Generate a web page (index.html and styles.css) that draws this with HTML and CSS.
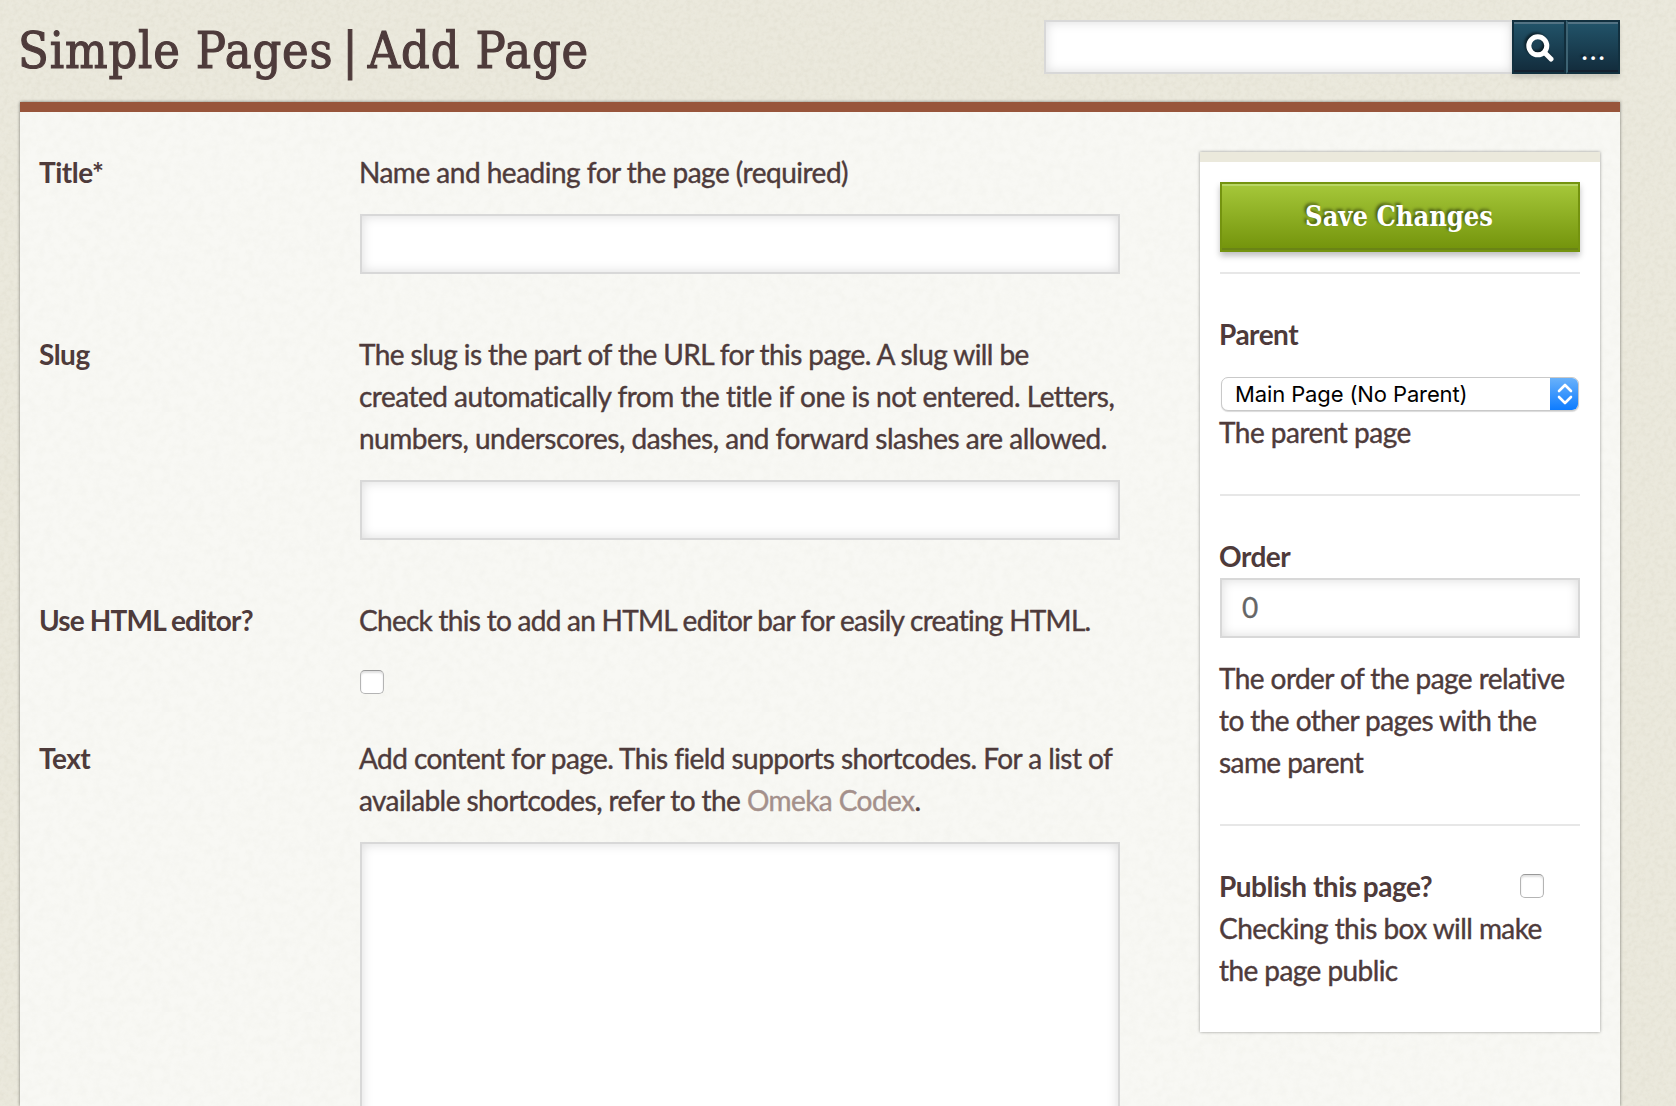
FILE: index.html
```html
<!DOCTYPE html>
<html lang="en">
<head>
<meta charset="utf-8">
<title>Simple Pages | Add Page</title>
<link rel="stylesheet" href="styles.css">
</head>
<body>
<header class="top">
  <h1 class="page-title">Simple Pages<span class="divider"> | </span>Add Page</h1>
  <form class="search">
    <input class="field search-field" type="text" aria-label="Search">
    <button class="search-btn" type="button" aria-label="Search">
      <svg class="search-icon" viewBox="0 0 28 28"><circle cx="11.8" cy="11.8" r="9" /><path d="M18.5 18.5L25 25" /></svg>
    </button>
    <button class="search-btn more-btn" type="button">...</button>
  </form>
</header>
<main class="panel">
  <section class="fields">
    <div class="row row-title">
      <label class="name">Title*</label>
      <div class="inputs">
        <p class="hint">Name and heading for the page (required)</p>
        <input class="field" type="text">
      </div>
    </div>
    <div class="row row-slug">
      <label class="name">Slug</label>
      <div class="inputs">
        <p class="hint"><span class="tight">The slug is the part of the URL for this page. A slug will be</span><br>created automatically from the title if one is not entered. Letters,<br>numbers, underscores, dashes, and forward slashes are allowed.</p>
        <input class="field" type="text">
      </div>
    </div>
    <div class="row row-editor">
      <label class="name">Use HTML editor?</label>
      <div class="inputs">
        <p class="hint">Check this to add an HTML editor bar for easily creating HTML.</p>
        <input class="check" type="checkbox">
      </div>
    </div>
    <div class="row row-text">
      <label class="name">Text</label>
      <div class="inputs">
        <p class="hint tight">Add content for page. This field supports shortcodes. For a list of<br>available shortcodes, refer to the <a class="link" href="#">Omeka Codex</a>.</p>
        <textarea class="field text-area"></textarea>
      </div>
    </div>
  </section>
  <aside class="save-panel">
    <button class="save-btn" type="button">Save Changes</button>
    <div class="block block-parent">
      <label class="name">Parent</label>
      <div class="select" role="combobox"><span class="select-value">Main Page (No Parent)</span><span class="select-cap"><svg class="select-arrows" viewBox="0 0 16 22"><path d="M2 8l6-6 6 6M2 14l6 6 6-6" /></svg></span></div>
      <p class="hint">The parent page</p>
    </div>
    <div class="block block-order">
      <label class="name">Order</label>
      <input class="field order-field" type="text" value="0">
      <p class="hint tight">The order of the page relative<br>to the other pages with the<br>same parent</p>
    </div>
    <div class="block block-publish">
      <div class="publish-line"><label class="name">Publish this page?</label><input class="check" type="checkbox"></div>
      <p class="hint tight">Checking this box will make<br>the page public</p>
    </div>
  </aside>
</main>
</body>
</html>
```
FILE: styles.css
```css
* { box-sizing: border-box; }

body {
  margin: 0;
  height: 1106px;
  overflow: hidden;
  padding: 20px 56px 0 20px;
  display: flex;
  flex-direction: column;
  color: #4e3b3b;
  font: 28px/42px Lato, "Liberation Sans", sans-serif;
  background-color: #ebe9dd;
  background-image: url("data:image/svg+xml,%3Csvg xmlns='http://www.w3.org/2000/svg' width='300' height='300'%3E%3Cfilter id='n'%3E%3CfeTurbulence type='fractalNoise' baseFrequency='.22' numOctaves='3' stitchTiles='stitch'/%3E%3CfeColorMatrix values='0 0 0 0 .45 0 0 0 0 .42 0 0 0 0 .3 .22 0 0 0 -.08'/%3E%3C/filter%3E%3Crect width='300' height='300' filter='url(%23n)'/%3E%3C/svg%3E");
}

.top {
  display: flex;
  justify-content: space-between;
  height: 82px;
  flex: none;
}

.page-title {
  margin: 1px 0 0 -2px;
  font: 400 50px/60px "DejaVu Serif Condensed", "DejaVu Serif", serif;
  letter-spacing: .85px;
  white-space: nowrap;
  -webkit-text-stroke: 1.1px #4e3b3b;
}

.divider { word-spacing: -6px; }

.search {
  display: flex;
  width: 576px;
  height: 54px;
}

.field {
  display: block;
  width: 100%;
  height: 60px;
  padding: 0 20px;
  border: 2px solid #d8d8d8;
  border-radius: 0;
  outline: 0;
  background: #fff;
  box-shadow: inset 0 0 12px rgba(0, 0, 0, .14);
  color: #666;
  font: inherit;
  resize: none;
  -webkit-text-stroke: .3px;
}

.search-field {
  width: 468px;
  height: 54px;
  border-right: 0;
}

.search-btn {
  display: flex;
  align-items: center;
  justify-content: center;
  width: 54px;
  padding: 2px 0 0 2px;
  border: 2px solid #12303f;
  background: linear-gradient(#22546a, #122b3b);
  box-shadow: inset 0 2px #537384, inset 0 -2px #14202f, 0 4px 4px rgba(0, 0, 0, .13);
  color: #fff;
}

.search-icon {
  width: 28px;
  height: 28px;
  fill: none;
  stroke: #fff;
  stroke-width: 5;
  stroke-linecap: round;
  filter: drop-shadow(-2px -2px 1px rgba(0, 0, 0, .5));
}

.more-btn {
  padding: 7px 0 0 3px;
  border-left: 2px solid #3d6373;
  font: 700 24px/40px Lato, sans-serif;
  letter-spacing: 2.8px;
  text-shadow: -2px -2px 2px rgba(0, 0, 0, .4);
}

.panel {
  flex: 1;
  min-height: 0;
  display: flex;
  justify-content: space-between;
  padding: 40px 20px 0;
  border-top: 10px solid #98553b;
  background-color: #f8f8f4;
  background-image: url("data:image/svg+xml,%3Csvg xmlns='http://www.w3.org/2000/svg' width='300' height='300'%3E%3Cfilter id='n'%3E%3CfeTurbulence type='fractalNoise' baseFrequency='.12' numOctaves='3' stitchTiles='stitch'/%3E%3CfeColorMatrix values='0 0 0 0 .5 0 0 0 0 .5 0 0 0 0 .4 .1 0 0 0 -.035'/%3E%3C/filter%3E%3Crect width='300' height='300' filter='url(%23n)'/%3E%3C/svg%3E");
  box-shadow: 0 0 3px rgba(0, 0, 0, .5);
}

.fields { width: 1080px; }

.row { display: flex; }

.row-title { height: 182px; }
.row-slug { height: 266px; }
.row-editor { height: 138px; }

.name,
.hint {
  margin: -1px 0 1px -1px;
  white-space: nowrap;
  letter-spacing: -.5px;
}

.name {
  display: block;
  font-weight: 700;
}

.row .name { width: 321px; }

.inputs { width: 760px; }

.hint { -webkit-text-stroke: .4px; }

.inputs .hint { margin-bottom: 21px; }

.tight { letter-spacing: -.57px; }

.row-editor .name { letter-spacing: -.85px; }
.row-editor .hint { letter-spacing: -.72px; }

.link {
  color: #a4908b;
  text-decoration: none;
}

.check {
  appearance: none;
  display: block;
  width: 24px;
  height: 24px;
  margin: 0;
  border: 1px solid #b4b4b4;
  border-top-color: #999;
  border-radius: 5px;
  background: #fff;
  box-shadow: inset 0 2px 2px rgba(0, 0, 0, .12);
}

.row-editor .check { margin-top: 29px; }

.text-area { height: 300px; }

.save-panel {
  width: 400px;
  height: 880px;
  padding: 20px;
  border-top: 10px solid #ebe9dc;
  background: #fff;
  box-shadow: 0 0 3px rgba(0, 0, 0, .4);
}

.save-btn {
  display: block;
  width: 100%;
  height: 70px;
  margin-bottom: 20px;
  padding: 0 2px 0 0;
  border: 2px solid #74930f;
  background: linear-gradient(#a6c83a, #73930b);
  box-shadow: inset 0 2px #b9d665, inset 0 -2px #6a8416, 0 4px 6px rgba(0, 0, 0, .25);
  color: #fff;
  font: 700 27px/40px "DejaVu Serif Condensed", "DejaVu Serif", serif;
  text-shadow: -2px -2px 3px rgba(0, 0, 0, .5);
  white-space: nowrap;
}

.block {
  padding-top: 40px;
  border-top: 2px solid #e7e7e7;
}

.block-parent { height: 222px; }
.block-parent .hint { margin-top: 0; }
.block-order { height: 330px; }
.block-order .hint { margin-top: 19px; }

.order-field { padding-bottom: 2px; }

.select {
  display: flex;
  height: 34px;
  margin: 22px 1px 0;
  border: 1px solid #c9c9c9;
  border-radius: 7px;
  background: #fff;
  box-shadow: 0 1px 1px rgba(0, 0, 0, .15);
  overflow: hidden;
}

.select-value {
  flex: 1;
  padding-left: 13px;
  color: #000;
  font: 22px/32px Inter, sans-serif;
  letter-spacing: -.12px;
}

.select-cap {
  display: flex;
  align-items: center;
  justify-content: center;
  width: 29px;
  margin: -1px;
  background: linear-gradient(#6cb3fa, #0a7aff);
}

.select-arrows {
  width: 16px;
  height: 22px;
  fill: none;
  stroke: #fff;
  stroke-width: 2.6;
  stroke-linecap: round;
  stroke-linejoin: round;
}

.publish-line {
  display: flex;
  justify-content: space-between;
  align-items: center;
  padding-right: 36px;
}

.publish-line .check { margin-top: -2px; }
```
